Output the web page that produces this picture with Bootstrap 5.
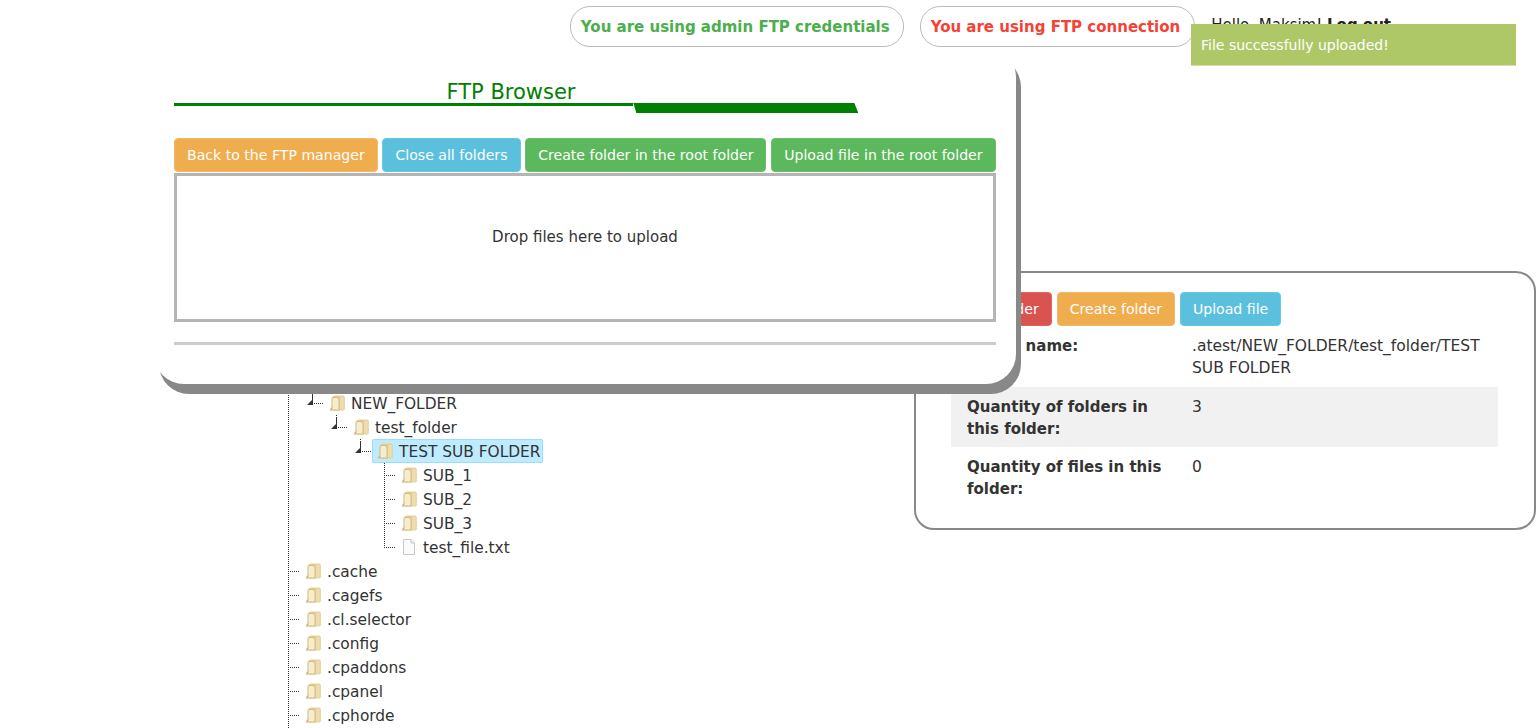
<!DOCTYPE html>
<html lang="en">
<head>
  <meta charset="UTF-8">
  <title>FTP Browser</title>
  <link rel="stylesheet" href="https://cdn.jsdelivr.net/npm/bootstrap@5.3.3/dist/css/bootstrap.min.css">
  <style>
    html, body { height: 728px; overflow: hidden; }
    body { font-family: "DejaVu Sans", Verdana, sans-serif; font-size: 15px; line-height: 22px; color: #333; position: relative; }
    .top-bar { height: 47px; padding-top: 6px; padding-right: 145px; }
    .conn-pill { height: 41px; padding: 0 14px 0 10px; border: 1px solid #bbb; border-radius: 20px; font-weight: 700; font-size: 15px; line-height: 40px; }
    .conn-ok { color: #4cae4c; padding-right: 13px; }
    .conn-bad { color: #f44336; }
    .hello-text { line-height: 39px; color: #222; }
    .hello-text a { color: #222; font-weight: 700; text-decoration: none; }
    .toast-note { position: absolute; left: 1191px; top: 24px; width: 325px; height: 42px; padding: 10px 10px 0; background: #aec867; color: #fff; font-size: 14px; border-bottom: 1px solid #d5dfb0; z-index: 20; }
    .ftp-modal { position: absolute; left: 154px; top: 47px; width: 862px; height: 337px; padding: 0 20px; background: #fff; border-radius: 30px; box-shadow: 5px 10px 0 #888; z-index: 10; }
    .modal-head { width: 684px; padding-top: 31px; color: green; }
    .modal-head-title { font-size: 21px; line-height: 28px; text-align: center; width: 674px; }
    .head-rule { height: 10px; margin-top: -3px; }
    .head-line { width: 460px; height: 2.500px; background: green; }
    .head-bar { width: 225px; height: 10px; background: green; clip-path: polygon(0 0, 221px 0, 225px 10px, 3px 10px); }
    .btn-row { margin-top: 25px; gap: 4.700px; }
    .flat-btn { height: 34px; padding: 0 12px; border: 1px solid; border-radius: 4px; color: #fff; font-size: 14.100px; line-height: 32px; white-space: nowrap; }
    .flat-btn:hover { color: #fff; }
    .b-warn { background: #f0ad4e; border-color: #f3b96a; }
    .b-info { background: #5bc0de; border-color: #6cc8e2; }
    .b-ok { background: #5cb85c; border-color: #6abf6a; }
    .b-bad { background: #d9534f; border-color: #df6561; }
    .drop-zone { height: 149px; margin-top: 1px; padding-top: 50px; border: 3px solid #b5b5b5; color: #333; }
    .modal-rule { height: 3px; margin-top: 20px; background: #ccc; }
    .page-main { padding-left: 276px; }
    .tree-col { width: 638px; padding-top: 320px; flex: none; }
    .ftree, .ftree ul { list-style: none; margin: 0; padding: 0; }
    .ftree ul { margin-left: 24px; }
    .ftree li { background: repeating-linear-gradient(to bottom, #333 0 1px, transparent 1px 2px) 12px 0 / 1px 100% no-repeat; }
    .ftree li.last-node { background-size: 1px 12px; }
    .tree-row { height: 24px; white-space: nowrap; }
    .tree-toggle { width: 24px; height: 24px; flex: none; background: repeating-linear-gradient(to right, #333 0 1px, transparent 1px 2px) 12px 12px / 12px 1px no-repeat; }
    .tree-label { display: flex; align-items: center; height: 24px; padding: 2px 3px 0 0; font-size: 15.400px; line-height: 22px; color: #333; text-decoration: none; }
    .tree-label svg { margin: -2px 6px 0 5px; flex: none; }
    .tree-label.is-selected { background: #beebff; box-shadow: inset 0 0 0 1px #99defd; border-radius: 2px; }
    .info-panel { width: 622px; height: 259px; margin-top: 224px; padding: 19px 36px 0 35px; border: 2px solid #888; border-radius: 20px; flex: none; }
    .panel-btns { margin-left: -17px; gap: 5px; }
    .info-table { width: 547px; margin-top: 1px; border-collapse: collapse; }
    .info-table td { padding: 8px 16px; vertical-align: top; font-size: 15.500px; }
    .info-table td:first-child { width: 225px; padding-right: 12px; font-size: 15px; font-weight: 700; }
    .info-table tr + tr td { padding-top: 9px; padding-bottom: 7px; }
    .info-table tr.stripe td { background: #f1f1f1; }
  </style>
</head>
<body>
<svg width="0" height="0" class="d-block">
  <symbol id="ico-folder" viewBox="0 0 16 16">
    <path d="M3.500 2 Q3.500 .5 5.500 .5 H13.500 Q15.800 .5 15.800 2.500 V14 Q15.800 15.500 14 15.500 H3.500 Z" fill="#e4cf96"/>
    <path d="M11 2 H14.800 V14.500 H11 Z" fill="#ecdcae"/>
    <path d="M.5 15.500 L2.500 12 V4 Q2.500 2 4.500 2 H8 Q10.500 2 10.500 4 V15.500 Z" fill="#d6ba78"/>
    <path d="M3.500 14.500 V4 Q3.500 3 5 3 H8 Q9.500 3 9.500 4.500 V14.500 Z" fill="#f6ecce"/>
  </symbol>
  <symbol id="ico-file" viewBox="0 0 16 16">
    <path d="M2.500 .5 H10 L13.500 4 V15.500 H2.500 Z" fill="#fbfbfb" stroke="#c8c8c8"/>
    <path d="M10 .5 V4 H13.500" fill="#eee" stroke="#c8c8c8"/>
  </symbol>
  <symbol id="ico-open" viewBox="0 0 24 24">
    <path d="M12.500 3 V9" stroke="#333" stroke-dasharray="1 1" fill="none"/>
    <path d="M7 14 L13 8 V14 Z" fill="#333"/>
    <path d="M14 12.500 H24" stroke="#333" stroke-dasharray="1 1" fill="none"/>
  </symbol>
</svg>

<div class="top-bar d-flex justify-content-end gap-3">
  <div class="conn-pill conn-ok">You are using admin FTP credentials</div>
  <div class="conn-pill conn-bad">You are using FTP connection</div>
  <div class="hello-text">Hello, Maksim! <a href="#">Log out</a></div>
</div>

<div class="toast-note">File successfully uploaded!</div>

<div class="ftp-modal">
  <div class="modal-head">
    <div class="modal-head-title">FTP Browser</div>
    <div class="head-rule d-flex">
      <div class="head-line"></div>
      <div class="head-bar"></div>
    </div>
  </div>
  <div class="btn-row d-flex">
    <a href="#" class="flat-btn b-warn text-decoration-none">Back to the FTP manager</a>
    <a href="#" class="flat-btn b-info text-decoration-none">Close all folders</a>
    <a href="#" class="flat-btn b-ok text-decoration-none">Create folder in the root folder</a>
    <a href="#" class="flat-btn b-ok text-decoration-none">Upload file in the root folder</a>
  </div>
  <div class="drop-zone d-flex justify-content-center">Drop files here to upload</div>
  <div class="modal-rule"></div>
</div>

<div class="page-main d-flex">
  <div class="tree-col">
    <ul class="ftree">
      <li>
        <div class="tree-row d-flex"><span class="tree-toggle"></span><a href="#" class="tree-label"><svg width="16" height="16"><use href="#ico-folder"/></svg>.atest</a></div>
        <ul>
          <li class="last-node">
            <div class="tree-row d-flex"><svg width="24" height="24"><use href="#ico-open"/></svg><a href="#" class="tree-label"><svg width="16" height="16"><use href="#ico-folder"/></svg>NEW_FOLDER</a></div>
            <ul>
              <li class="last-node">
                <div class="tree-row d-flex"><svg width="24" height="24"><use href="#ico-open"/></svg><a href="#" class="tree-label"><svg width="16" height="16"><use href="#ico-folder"/></svg>test_folder</a></div>
                <ul>
                  <li class="last-node">
                    <div class="tree-row d-flex"><svg width="24" height="24"><use href="#ico-open"/></svg><a href="#" class="tree-label is-selected"><svg width="16" height="16"><use href="#ico-folder"/></svg>TEST SUB FOLDER</a></div>
                    <ul>
                      <li><div class="tree-row d-flex"><span class="tree-toggle"></span><a href="#" class="tree-label"><svg width="16" height="16"><use href="#ico-folder"/></svg>SUB_1</a></div></li>
                      <li><div class="tree-row d-flex"><span class="tree-toggle"></span><a href="#" class="tree-label"><svg width="16" height="16"><use href="#ico-folder"/></svg>SUB_2</a></div></li>
                      <li><div class="tree-row d-flex"><span class="tree-toggle"></span><a href="#" class="tree-label"><svg width="16" height="16"><use href="#ico-folder"/></svg>SUB_3</a></div></li>
                      <li class="last-node"><div class="tree-row d-flex"><span class="tree-toggle"></span><a href="#" class="tree-label"><svg width="16" height="16"><use href="#ico-file"/></svg>test_file.txt</a></div></li>
                    </ul>
                  </li>
                </ul>
              </li>
            </ul>
          </li>
        </ul>
      </li>
      <li><div class="tree-row d-flex"><span class="tree-toggle"></span><a href="#" class="tree-label"><svg width="16" height="16"><use href="#ico-folder"/></svg>.cache</a></div></li>
      <li><div class="tree-row d-flex"><span class="tree-toggle"></span><a href="#" class="tree-label"><svg width="16" height="16"><use href="#ico-folder"/></svg>.cagefs</a></div></li>
      <li><div class="tree-row d-flex"><span class="tree-toggle"></span><a href="#" class="tree-label"><svg width="16" height="16"><use href="#ico-folder"/></svg>.cl.selector</a></div></li>
      <li><div class="tree-row d-flex"><span class="tree-toggle"></span><a href="#" class="tree-label"><svg width="16" height="16"><use href="#ico-folder"/></svg>.config</a></div></li>
      <li><div class="tree-row d-flex"><span class="tree-toggle"></span><a href="#" class="tree-label"><svg width="16" height="16"><use href="#ico-folder"/></svg>.cpaddons</a></div></li>
      <li><div class="tree-row d-flex"><span class="tree-toggle"></span><a href="#" class="tree-label"><svg width="16" height="16"><use href="#ico-folder"/></svg>.cpanel</a></div></li>
      <li><div class="tree-row d-flex"><span class="tree-toggle"></span><a href="#" class="tree-label"><svg width="16" height="16"><use href="#ico-folder"/></svg>.cphorde</a></div></li>
      <li><div class="tree-row d-flex"><span class="tree-toggle"></span></div></li>
    </ul>
  </div>
  <div class="info-panel">
    <div class="d-flex panel-btns">
      <a href="#" class="flat-btn b-bad text-decoration-none">Delete folder</a>
      <a href="#" class="flat-btn b-warn text-decoration-none">Create folder</a>
      <a href="#" class="flat-btn b-info text-decoration-none">Upload file</a>
    </div>
    <table class="info-table">
      <tr><td>Folder name:</td><td>.atest/NEW_FOLDER/test_folder/TEST SUB FOLDER</td></tr>
      <tr class="stripe"><td>Quantity of folders in this folder:</td><td>3</td></tr>
      <tr><td>Quantity of files in this folder:</td><td>0</td></tr>
    </table>
  </div>
</div>
</body>
</html>
